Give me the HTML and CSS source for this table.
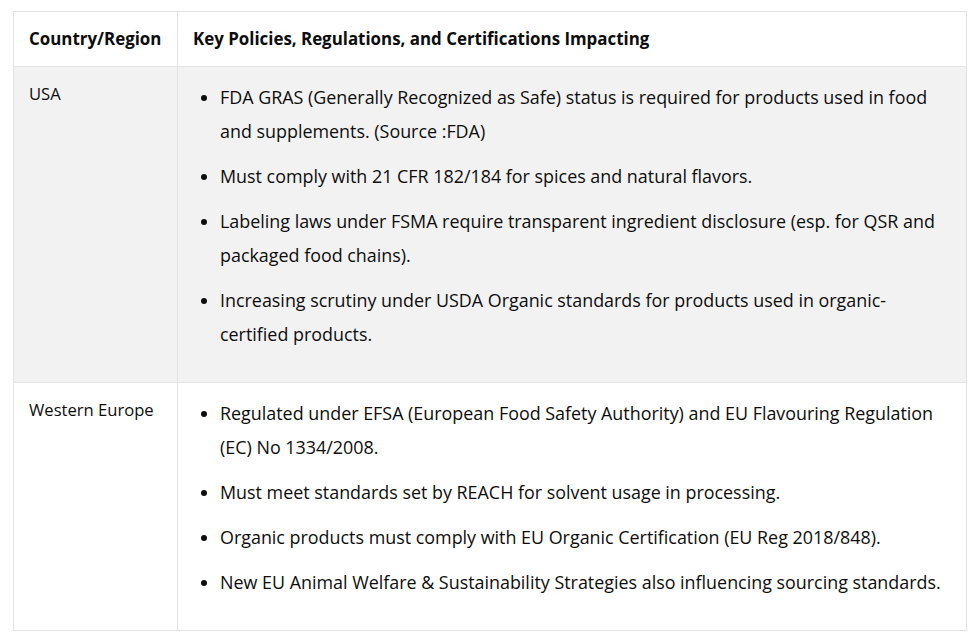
FILE: index.html
```html
<!DOCTYPE html>
<html lang="en">

<head>
  <meta name="viewport" content="width=device-width, initial-scale=1.0">
  <link rel="stylesheet" href="styles.css">
</head>

<body>

  <table class="policy-table">
    <thead>
      <tr>
        <th class="col-region">Country/Region</th>
        <th>Key Policies, Regulations, and Certifications Impacting</th>
      </tr>
    </thead>
    <tbody>
      <tr class="shaded">
        <td class="region">USA</td>
        <td>
          <ul>
            <li>FDA GRAS (Generally Recognized as Safe) status is required for products used in food and supplements. (Source :FDA)</li>
            <li>Must comply with 21 CFR 182/184 for spices and natural flavors.</li>
            <li>Labeling laws under FSMA require transparent ingredient disclosure (esp. for QSR and packaged food chains).</li>
            <li>Increasing scrutiny under USDA Organic standards for products used in organic-certified products.</li>
          </ul>
        </td>
      </tr>
      <tr>
        <td class="region">Western Europe</td>
        <td>
          <ul>
            <li>Regulated under EFSA (European Food Safety Authority) and EU Flavouring Regulation (EC) No 1334/2008.</li>
            <li>Must meet standards set by REACH for solvent usage in processing.</li>
            <li>Organic products must comply with EU Organic Certification (EU Reg 2018/848).</li>
            <li>New EU Animal Welfare &amp; Sustainability Strategies also influencing sourcing standards.</li>
          </ul>
        </td>
      </tr>
    </tbody>
  </table>

</body>

</html>
```

FILE: styles.css
```css
html,
body {
  margin: 0;
  padding: 0;
  background: #fff;
  font-family: "Open Sans", "Noto Sans", sans-serif;
  color: #0d0d0d;
}

body {
  padding: 11px 6px 0 13px;
}

.policy-table {
  width: 954px;
  table-layout: fixed;
  border-collapse: collapse;
  font-size: 17.9px;
}

.policy-table th,
.policy-table td {
  border: 1px solid #e3e3e3;
  text-align: left;
  vertical-align: top;
}

.policy-table th {
  padding: 15px 15px;
  line-height: 24px;
  font-size: 16.9px;
  font-weight: 700;
}

.col-region {
  width: 164px;
  box-sizing: border-box;
}

.policy-table td {
  padding: 10px 15px;
  line-height: 34px;
}

.policy-table .region {
  white-space: nowrap;
  font-size: 16.6px;
}

.shaded td {
  background: #f2f2f2;
}

.policy-table ul {
  margin: 3px 0 21px;
  padding-left: 27px;
}

.policy-table li + li {
  margin-top: 11px;
}
```
